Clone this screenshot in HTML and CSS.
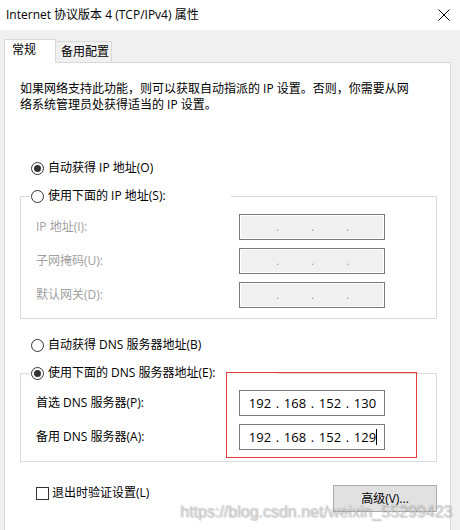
FILE: index.html
```html
<!DOCTYPE html>
<html lang="zh-CN">
<head>
<meta charset="utf-8">
<title>Internet 协议版本 4 (TCP/IPv4) 属性</title>
<link rel="stylesheet" href="styles.css">
</head>
<body>
<div class="window">
  <div class="titlebar">
    <span class="title">Internet 协议版本 4 (TCP/IPv4) 属性</span>
    <svg class="close" width="12" height="12" viewBox="0 0 12 12"><path d="M0.5 0.5 L11.5 11.5 M11.5 0.5 L0.5 11.5" stroke="#000" stroke-width="1" fill="none"/></svg>
  </div>
  <div class="dialog">
    <div class="tabs">
      <div class="tab active">常规</div>
      <div class="tab inactive">备用配置</div>
    </div>
    <div class="panel">
      <p class="desc">如果网络支持此功能，则可以获取自动指派的 IP 设置。否则，你需要从网<br>络系统管理员处获得适当的 IP 设置。</p>

      <div class="radio-row first"><span class="radio checked"></span>自动获得 IP 地址(O)</div>

      <fieldset class="group g1">
        <legend class="legend l1"><span class="radio"></span>使用下面的 IP 地址(S):</legend>
        <div class="field disabled"><span class="label">IP 地址(I):</span>
          <div class="ipbox off"><span class="oct"></span><span class="dot">.</span><span class="oct"></span><span class="dot">.</span><span class="oct"></span><span class="dot">.</span><span class="oct"></span></div>
        </div>
        <div class="field disabled"><span class="label">子网掩码(U):</span>
          <div class="ipbox off"><span class="oct"></span><span class="dot">.</span><span class="oct"></span><span class="dot">.</span><span class="oct"></span><span class="dot">.</span><span class="oct"></span></div>
        </div>
        <div class="field disabled"><span class="label">默认网关(D):</span>
          <div class="ipbox off"><span class="oct"></span><span class="dot">.</span><span class="oct"></span><span class="dot">.</span><span class="oct"></span><span class="dot">.</span><span class="oct"></span></div>
        </div>
      </fieldset>

      <div class="radio-row second"><span class="radio"></span>自动获得 DNS 服务器地址(B)</div>

      <fieldset class="group g2">
        <legend class="legend l2"><span class="radio checked"></span>使用下面的 DNS 服务器地址(E):</legend>
        <div class="field"><span class="label">首选 DNS 服务器(P):</span>
          <div class="ipbox"><span class="oct">192</span><span class="dot">.</span><span class="oct">168</span><span class="dot">.</span><span class="oct">152</span><span class="dot">.</span><span class="oct">130</span></div>
        </div>
        <div class="field"><span class="label">备用 DNS 服务器(A):</span>
          <div class="ipbox"><span class="oct">192</span><span class="dot">.</span><span class="oct">168</span><span class="dot">.</span><span class="oct">152</span><span class="dot">.</span><span class="oct">129<span class="caret"></span></span></div>
        </div>
      </fieldset>

      <div class="bottom-row">
        <div class="check-row"><span class="checkbox"></span>退出时验证设置(L)</div>
        <div class="button">高级(V)...</div>
      </div>
    </div>
  </div>
  <div class="highlight"></div>
  <div class="watermark">https://blog.csdn.net/weixin_55299423</div>
</div>
</body>
</html>
```

FILE: styles.css
```css
* { box-sizing: border-box; }
html, body { margin: 0; padding: 0; }
body {
  width: 460px;
  height: 530px;
  overflow: hidden;
  background: #fff;
  font-family: "Segoe UI", "Open Sans", "Noto Sans CJK SC", sans-serif;
  font-size: 12px;
  line-height: 16px;
  color: #000;
}
.window {
  position: relative;
  width: 460px;
  height: 530px;
  display: flex;
  flex-direction: column;
}
.titlebar {
  height: 30px;
  flex: none;
  display: flex;
  align-items: center;
  justify-content: space-between;
  padding: 0 10px 0 6px;
  background: #fff;
}
.title { white-space: nowrap; }
.close { display: block; margin-top: -1px; }

.dialog {
  flex: 1;
  display: flex;
  flex-direction: column;
  background: #f0f0f0;
  padding: 9px 9px 0 4px;
}
.tabs {
  display: flex;
  align-items: flex-end;
  height: 23px;
  flex: none;
}
.tab {
  border: 1px solid #d9d9d9;
  border-bottom: none;
  white-space: nowrap;
  padding-top: 2px;
}
.tab.active {
  position: relative;
  z-index: 1;
  width: 52px;
  height: 24px;
  margin-bottom: -1px;
  padding-left: 7px;
  background: #fff;
}
.tab.inactive {
  width: 57px;
  height: 21px;
  margin-left: -1px;
  padding-left: 5px;
  padding-top: 2px;
  background: #f0f0f0;
}
.panel {
  flex: 1;
  background: #fff;
  border: 1px solid #d9d9d9;
  border-bottom: none;
}
.desc {
  margin: 18px 0 0 15px;
  white-space: nowrap;
}
.radio-row {
  display: flex;
  align-items: center;
  height: 16px;
  padding-left: 26px;
  white-space: nowrap;
}
.radio-row.first { margin-top: 47px; }
.radio-row.second { margin-top: 18px; }
.radio {
  width: 13px;
  height: 13px;
  border: 1px solid #333;
  border-radius: 50%;
  background: #fff;
  margin-right: 4px;
  flex: none;
  display: inline-flex;
  align-items: center;
  justify-content: center;
}
.radio.checked::after {
  content: "";
  width: 7px;
  height: 7px;
  border-radius: 50%;
  background: #333;
}
.group {
  margin: 12px 0 0 15px;
  width: 417px;
  border: 1px solid #dcdcdc;
  padding: 10px 0 10px 9px;
  min-width: 0;
}
.group.g2 { padding-top: 9px; padding-bottom: 11px; }
.legend {
  display: flex;
  align-items: center;
  height: 16px;
  padding: 0 0 0 1px;
  white-space: nowrap;
  background: #fff;
}
.legend.l1 { width: 201px; }
.legend.l2 { width: 248px; }
.field {
  display: flex;
  align-items: center;
  height: 26px;
  padding-left: 6px;
}
.field + .field { margin-top: 8px; }
.label {
  width: 203px;
  flex: none;
  white-space: nowrap;
}
.field.disabled .label { color: #a0a0a0; }
.ipbox {
  width: 146px;
  height: 26px;
  border: 1px solid #7a7a7a;
  background: #fff;
  display: flex;
  align-items: center;
  padding-left: 6px;
  font-size: 13px;
}
.ipbox.off {
  background: #f0f0f0;
  box-shadow: inset 0 0 0 1px #fff;
  color: #8a8a8a;
}
.oct {
  width: 28px;
  text-align: center;
  flex: none;
  white-space: nowrap;
}
.dot {
  width: 7px;
  text-align: center;
  flex: none;
}
.ipbox.off .dot { font-size: 10px; }
.caret {
  display: inline-block;
  width: 1px;
  height: 16px;
  background: #000;
  vertical-align: middle;
  margin-right: -1px;
  margin-top: -2px;
}
.bottom-row {
  margin: 23px 0 0 15px;
  width: 417px;
  display: flex;
  justify-content: space-between;
  align-items: flex-start;
  padding-left: 16px;
}
.check-row {
  display: flex;
  align-items: center;
  height: 16px;
  white-space: nowrap;
}
.checkbox {
  width: 13px;
  height: 13px;
  border: 1px solid #333;
  background: #fff;
  margin-right: 3px;
  flex: none;
}
.button {
  width: 104px;
  height: 27px;
  background: #e1e1e1;
  border: 1px solid #adadad;
  display: flex;
  align-items: center;
  justify-content: center;
  white-space: nowrap;
}
.highlight {
  position: absolute;
  left: 226px;
  top: 372px;
  width: 191px;
  height: 86px;
  border: 1px solid #e83a3a;
  pointer-events: none;
}
.watermark {
  position: absolute;
  left: 180px;
  top: 503px;
  font-family: "Liberation Sans", Arial, sans-serif;
  font-size: 16px;
  line-height: 18px;
  white-space: nowrap;
  color: rgba(255, 255, 255, 0.55);
  text-shadow: 0 0 1px rgba(0, 0, 0, 0.35), 1px 1px 1px rgba(0, 0, 0, 0.15);
  pointer-events: none;
}
```
